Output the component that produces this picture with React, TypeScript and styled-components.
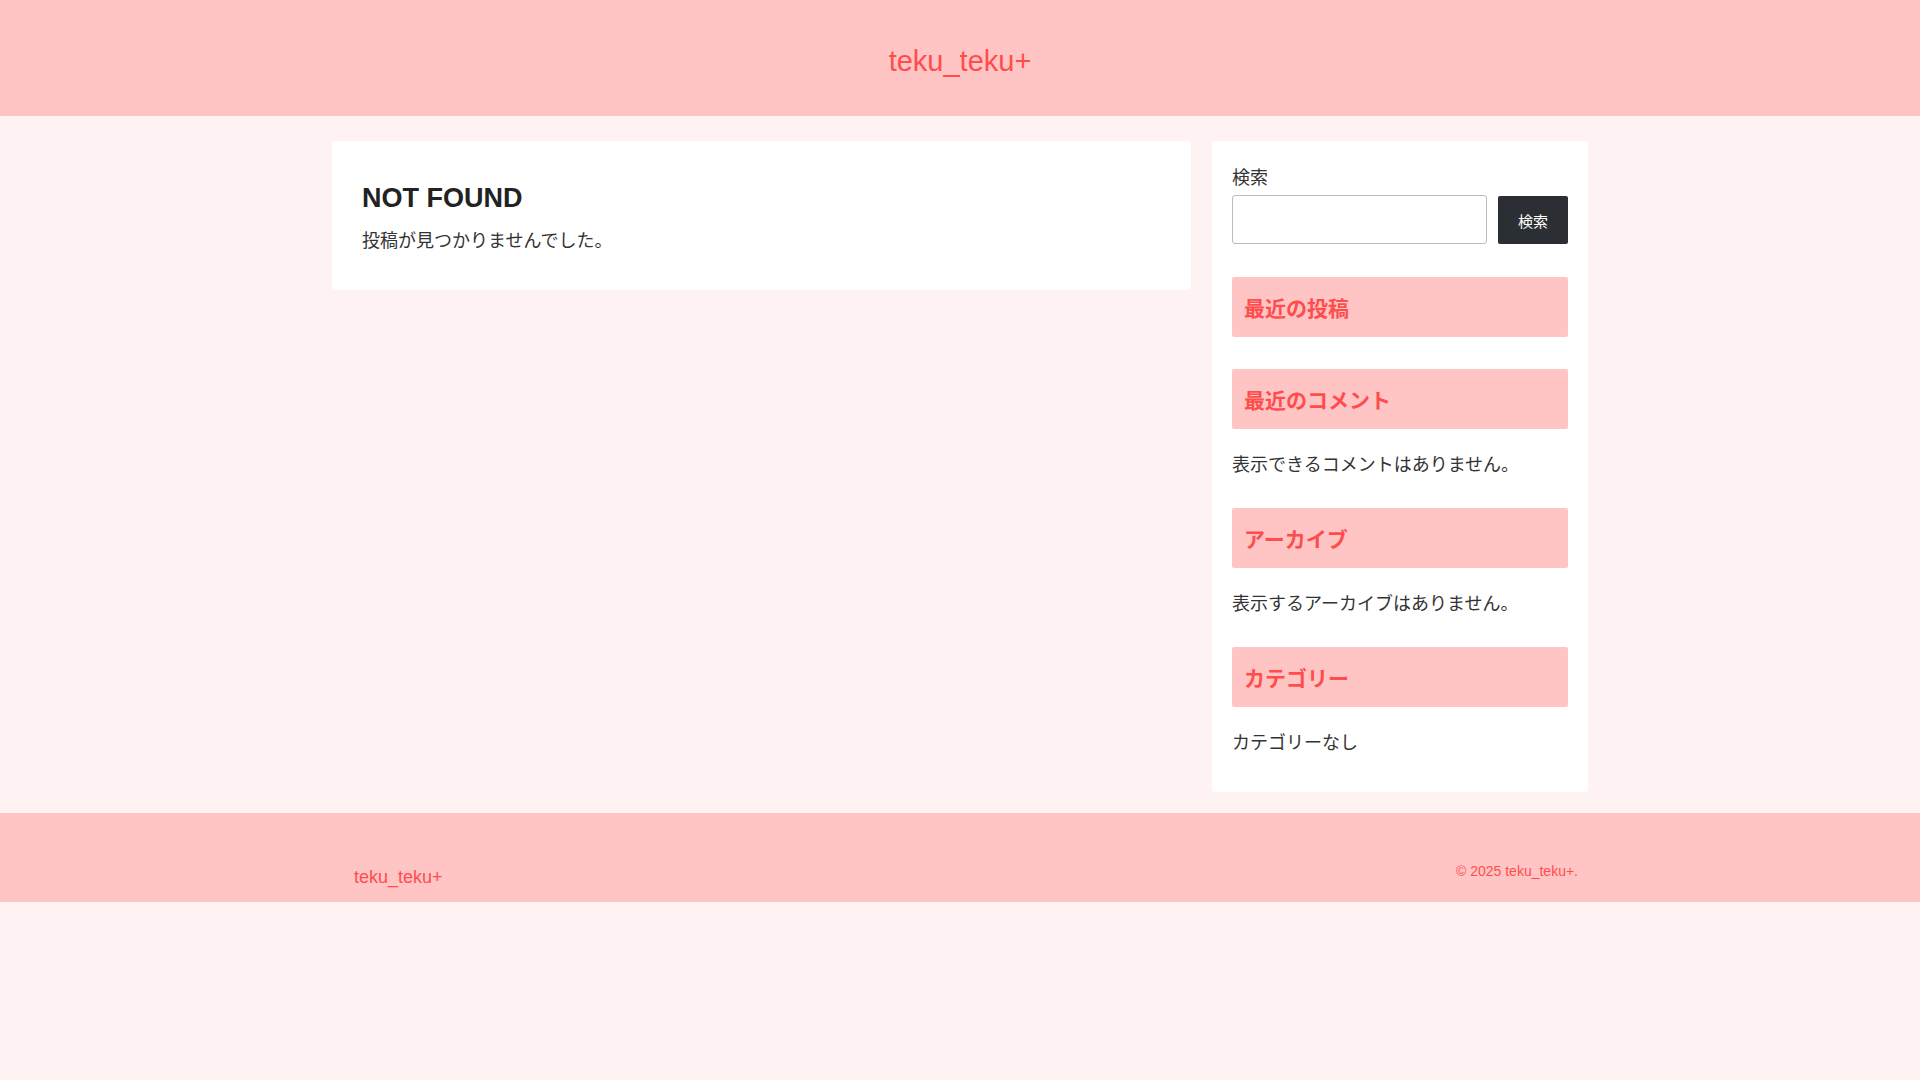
import React from 'react';
import styled, { createGlobalStyle } from 'styled-components';

const Global = createGlobalStyle`
  body {
    margin: 0;
    background: #fff2f2;
    font-family: "Liberation Sans", "Noto Sans CJK JP", sans-serif;
    color: #333;
  }
`;

const Header = styled.header`
  background: #ffc5c5;
  height: 116px;
  display: flex;
  align-items: center;
  justify-content: center;
`;

const SiteTitle = styled.div`
  color: #ff4d4d;
  font-size: 29px;
  margin-top: 6px;
`;

const Wrap = styled.div`
  width: 1256px;
  margin: 0 auto;
  padding: 25px 0 21px;
  display: flex;
  gap: 21px;
  align-items: flex-start;
`;

const Card = styled.div<{ $w: number }>`
  background: #fff;
  border-radius: 4px;
  width: ${p => p.$w}px;
  box-sizing: border-box;
`;

const MainCard = styled(Card)`
  padding: 42px 30px 38px;
`;

const Title = styled.h1`
  font-size: 27px;
  font-weight: bold;
  margin: 0 0 12px;
  color: #222;
`;

const Text = styled.p`
  font-size: 18px;
  margin: 0;
  color: #333;
`;

const SideCard = styled(Card)`
  padding: 22px 20px 38px;
`;

const Label = styled.div`
  font-size: 18px;
  margin-bottom: 6px;
`;

const SearchRow = styled.div`
  display: flex;
  gap: 11px;
  margin-bottom: 33px;
`;

const Input = styled.input`
  width: 255px;
  height: 49px;
  box-sizing: border-box;
  border: 1px solid #bbb;
  border-radius: 3px;
`;

const Button = styled.button`
  width: 70px;
  height: 48px;
  margin-top: 1px;
  background: #2b2f33;
  color: #fff;
  border: none;
  border-radius: 2px;
  font-size: 15px;
  font-family: inherit;
`;

const WidgetTitle = styled.h2`
  background: #ffc5c5;
  color: #ff4d4d;
  font-size: 21px;
  font-weight: bold;
  height: 60px;
  display: flex;
  align-items: center;
  padding: 0 12px;
  margin: 0 0 ${p => 0}px;
  border-radius: 2px;
`;

const Widget = styled.div`
  margin-bottom: 32px;
  &:last-child { margin-bottom: 0; }
`;

const WidgetText = styled.p`
  font-size: 18px;
  margin: 21px 0 0;
`;

const Footer = styled.footer`
  background: #ffc5c5;
  height: 89px;
`;

const FooterInner = styled.div`
  width: 1256px;
  margin: 0 auto;
  display: flex;
  justify-content: space-between;
  padding: 50px 10px 0 22px;
  box-sizing: border-box;
  color: #ff4d4d;
`;

const FooterTitle = styled.div`
  font-size: 18px;
  margin-top: 4px;
`;

const Copy = styled.div`
  font-size: 14px;
`;

export default function App() {
  return (
    <>
      <Global />
      <Header><SiteTitle>teku_teku+</SiteTitle></Header>
      <Wrap>
        <MainCard $w={859}>
          <Title>NOT FOUND</Title>
          <Text>投稿が見つかりませんでした。</Text>
        </MainCard>
        <SideCard $w={376}>
          <Label>検索</Label>
          <SearchRow>
            <Input />
            <Button>検索</Button>
          </SearchRow>
          <Widget><WidgetTitle>最近の投稿</WidgetTitle></Widget>
          <Widget>
            <WidgetTitle>最近のコメント</WidgetTitle>
            <WidgetText>表示できるコメントはありません。</WidgetText>
          </Widget>
          <Widget>
            <WidgetTitle>アーカイブ</WidgetTitle>
            <WidgetText>表示するアーカイブはありません。</WidgetText>
          </Widget>
          <Widget>
            <WidgetTitle>カテゴリー</WidgetTitle>
            <WidgetText>カテゴリーなし</WidgetText>
          </Widget>
        </SideCard>
      </Wrap>
      <Footer>
        <FooterInner>
          <FooterTitle>teku_teku+</FooterTitle>
          <Copy>© 2025 teku_teku+.</Copy>
        </FooterInner>
      </Footer>
    </>
  );
}
